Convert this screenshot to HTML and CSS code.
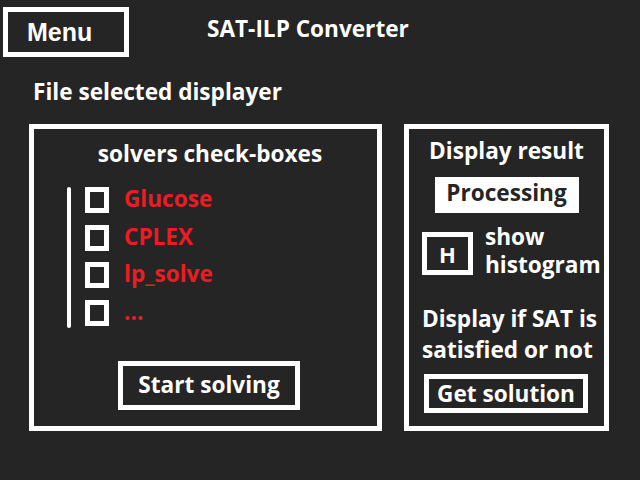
FILE: index.html
```html
<!DOCTYPE html>
<html lang="en">
<head>
<meta charset="utf-8">
<title>SAT-ILP Converter</title>
<link rel="stylesheet" href="styles.css">
</head>
<body>
<div class="app">
  <header class="top">
    <div class="menu">Menu</div>
    <h1 class="title">SAT-ILP Converter</h1>
  </header>
  <p class="file">File selected displayer</p>
  <main class="panels">
    <section class="panel solvers">
      <h2 class="solvers-title">solvers check-boxes</h2>
      <div class="list">
        <div class="rail"></div>
        <ul class="options">
          <li class="option"><span class="box"></span><span class="label">Glucose</span></li>
          <li class="option"><span class="box"></span><span class="label">CPLEX</span></li>
          <li class="option"><span class="box"></span><span class="label">lp_solve</span></li>
          <li class="option"><span class="box"></span><span class="label">...</span></li>
        </ul>
      </div>
      <div class="btn start">Start solving</div>
    </section>
    <section class="panel result">
      <h2 class="result-title">Display result</h2>
      <div class="status">Processing</div>
      <div class="hist">
        <div class="hbox">H</div>
        <div class="hist-text">show<br>histogram</div>
      </div>
      <p class="sat">Display if SAT is<br>satisfied or not</p>
      <div class="btn get">Get solution</div>
    </section>
  </main>
</div>
</body>
</html>
```

FILE: styles.css
```css
* {
  box-sizing: border-box;
}

html, body {
  margin: 0;
  padding: 0;
}

body {
  width: 640px;
  height: 480px;
  background: #252525;
  color: #ffffff;
  font-family: "Open Sans", "Noto Sans", sans-serif;
  font-weight: 700;
  font-size: 22.6px;
  line-height: 30px;
  overflow: hidden;
}

.app {
  width: 640px;
  height: 480px;
}

.top {
  display: flex;
  align-items: flex-start;
}

.menu {
  margin: 7px 0 0 3px;
  width: 126px;
  height: 50px;
  border: 5px solid #ffffff;
  padding-left: 19px;
  font-family: "Liberation Sans", Arial, sans-serif;
  font-size: 25px;
  line-height: 40px;
}

.title {
  margin: 0 0 0 78px;
  padding-top: 14px;
  font-size: 22.6px;
  line-height: 30px;
  font-weight: 700;
}

.file {
  margin: 20px 0 0 33px;
}

.panels {
  display: flex;
  align-items: flex-start;
  gap: 22px;
  margin-top: 17px;
  padding-left: 29px;
}

.panel {
  border: 5px solid #ffffff;
  height: 307px;
  display: flex;
  flex-direction: column;
}

.solvers {
  width: 353px;
  padding-top: 10px;
}

.solvers-title {
  margin: 0;
  padding-left: 9px;
  text-align: center;
  font-size: 22.6px;
  line-height: 30px;
}

.list {
  display: flex;
  margin: 18px 0 0 33px;
}

.rail {
  width: 4px;
  height: 141px;
  background: #ffffff;
  border-radius: 2px;
}

.options {
  list-style: none;
  margin: 0 0 0 14px;
  padding: 0;
  display: flex;
  flex-direction: column;
  gap: 11.7px;
}

.option {
  display: flex;
  align-items: flex-start;
  height: 26px;
}

.box {
  width: 24px;
  height: 26px;
  border: 5px solid #ffffff;
}

.label {
  margin-left: 15px;
  line-height: 24px;
  color: #ed1c24;
}

.btn {
  border: 5px solid #ffffff;
  text-align: center;
}

.start {
  margin: 33px 0 0 84px;
  width: 182px;
  height: 49px;
  line-height: 38px;
}

.result {
  width: 205px;
  padding-top: 7px;
  align-items: center;
}

.result-title {
  margin: 0;
  font-size: 22.6px;
  line-height: 30px;
}

.status {
  margin-top: 11px;
  width: 144px;
  height: 36px;
  padding-top: 1px;
  background: #ffffff;
  color: #252525;
  text-align: center;
}

.hist {
  align-self: stretch;
  display: flex;
  align-items: flex-start;
  margin-top: 9.5px;
  padding-left: 13px;
}

.hbox {
  margin-top: 9.5px;
  width: 51px;
  height: 43px;
  border: 5px solid #ffffff;
  display: flex;
  align-items: center;
  justify-content: center;
  font-size: 22px;
  line-height: 30px;
}

.hist-text {
  margin-left: 12px;
  line-height: 28px;
}

.sat {
  align-self: stretch;
  margin: 24.5px 0 0 0;
  padding-left: 13px;
  line-height: 31px;
}

.get {
  align-self: flex-start;
  margin: 9px 0 0 15px;
  width: 164px;
  height: 39px;
  line-height: 29px;
}
```
